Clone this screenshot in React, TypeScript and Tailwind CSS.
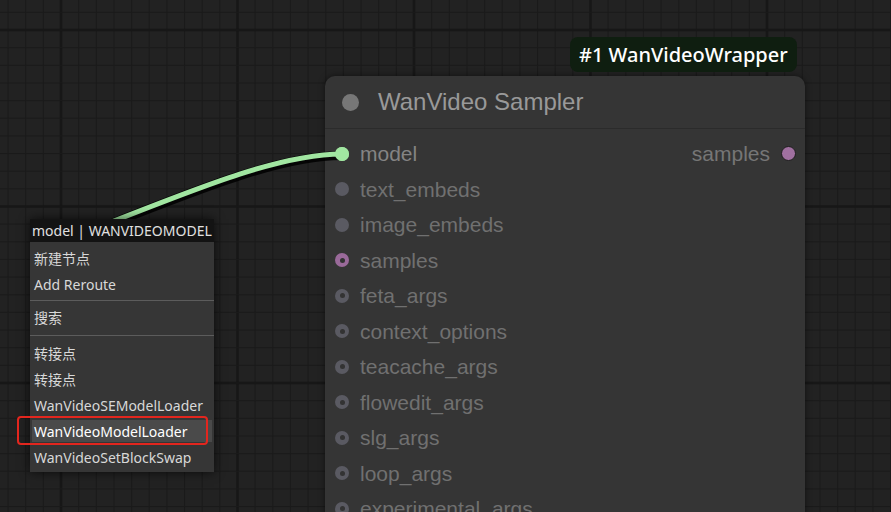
const STEP = 17.65;

const GridBackground = () => {
  const verticals = [];
  for (let i = -4; i <= 47; i++) verticals.push(i);
  const horizontals = [];
  for (let i = -2; i <= 28; i++) horizontals.push(i);
  return (
    <svg className="absolute inset-0" width="891" height="512">
      <rect width="891" height="512" fill="#222222" />
      {verticals.map((i) => (
        <line
          key={"v" + i}
          x1={61 + i * STEP}
          x2={61 + i * STEP}
          y1={0}
          y2={512}
          stroke={i % 10 === 0 ? "#171717" : "#1b1b1b"}
          strokeWidth={i % 10 === 0 ? 2.5 : 1}
        />
      ))}
      {horizontals.map((i) => (
        <line
          key={"h" + i}
          y1={30 + i * STEP}
          y2={30 + i * STEP}
          x1={0}
          x2={891}
          stroke={i % 10 === 0 ? "#171717" : "#1b1b1b"}
          strokeWidth={i % 10 === 0 ? 2.5 : 1}
        />
      ))}
    </svg>
  );
};

type Slot = { name: string; kind: "link" | "plain" | "purple" | "optional" };

const inputs: Slot[] = [
  { name: "text_embeds", kind: "plain" },
  { name: "image_embeds", kind: "plain" },
  { name: "samples", kind: "purple" },
  { name: "feta_args", kind: "optional" },
  { name: "context_options", kind: "optional" },
  { name: "teacache_args", kind: "optional" },
  { name: "flowedit_args", kind: "optional" },
  { name: "slg_args", kind: "optional" },
  { name: "loop_args", kind: "optional" },
  { name: "experimental_args", kind: "optional" },
];

const Dot = ({ kind }: { kind: Slot["kind"] }) => {
  if (kind === "link") return <span className="w-[14px] h-[14px] rounded-full bg-[#a1e6a1] shrink-0" />;
  if (kind === "plain") return <span className="w-[14px] h-[14px] rounded-full bg-[#5a5a62] shrink-0" />;
  return (
    <span
      className={
        kind === "purple"
          ? "w-[14px] h-[14px] rounded-full bg-[#9a6a9a] shrink-0 flex items-center justify-center"
          : "w-[14px] h-[14px] rounded-full bg-[#5a5a62] shrink-0 flex items-center justify-center"
      }
    >
      <span className="w-[5px] h-[5px] rounded-full bg-[#333333]" />
    </span>
  );
};

const SamplerNode = () => {
  return (
    <div className="absolute left-[325px] top-[76px] w-[480px] h-[460px] bg-[#353535] rounded-t-[10px] shadow-[0_0_6px_rgba(0,0,0,0.5)] font-['Liberation_Sans',Arial,sans-serif]">
      <div className="h-[53px] flex items-center pl-[17px] gap-[19px] border-b border-[#2b2b2b]">
        <span className="w-[17px] h-[17px] rounded-full bg-[#777777]" />
        <span className="text-[24px] text-[#999999]">WanVideo Sampler</span>
      </div>
      <div className="pt-[7px] flex flex-col">
        <div className="h-[35.5px] flex items-center justify-between pl-[10px] pr-[9px]">
          <div className="flex items-center gap-[11px]">
            <Dot kind="link" />
            <span className="text-[21px] text-[#848484]">model</span>
          </div>
          <div className="flex items-center gap-[11px]">
            <span className="text-[21px] text-[#767676]">samples</span>
            <span className="w-[15px] h-[15px] rounded-full bg-[#a070a0] border border-[#1e1e1e]" />
          </div>
        </div>
        {inputs.map((s) => (
          <div key={s.name} className="h-[35.5px] flex items-center gap-[11px] pl-[10px]">
            <Dot kind={s.kind} />
            <span className="text-[21px] text-[#707070]">{s.name}</span>
          </div>
        ))}
      </div>
    </div>
  );
};

const Link = () => (
  <svg className="absolute inset-0 pointer-events-none" width="891" height="512">
    <path d="M342 154 C 270 154, 170 200, 40 250" fill="none" stroke="#000000" strokeOpacity="0.85" strokeWidth="9" transform="translate(0 1.5)" />
    <path d="M342 154 C 270 154, 170 200, 40 250" fill="none" stroke="#a1e6a1" strokeWidth="5" />
    <circle cx="342" cy="154" r="7" fill="#a1e6a1" />
  </svg>
);

type MenuEntry = { label: string } | { sep: string };

const menuItems: MenuEntry[] = [
  { label: "新建节点" },
  { label: "Add Reroute" },
  { sep: "my-[3px]" },
  { label: "搜索" },
  { sep: "mt-[5px] mb-[4px]" },
  { label: "转接点" },
  { label: "转接点" },
  { label: "WanVideoSEModelLoader" },
  { label: "WanVideoModelLoader" },
  { label: "WanVideoSetBlockSwap" },
];

const ContextMenu = () => (
  <div className="absolute left-[30px] top-[219px] w-[184px] shadow-[0_0_10px_rgba(0,0,0,0.7)] font-['Noto_Sans','Noto_Sans_CJK_SC',sans-serif] text-[14px]">
    <div className="h-[23px] bg-[#131313] text-[#e0e0e0] flex items-center px-[2px] leading-none">
      model | WANVIDEOMODEL
    </div>
    <div className="bg-[#363636] pt-[3px] pb-[2px] px-[2px]">
      {menuItems.map((item, i) =>
        "sep" in item ? (
          <div key={i} className={item.sep + " h-px bg-[#5c5c5c] -mx-[2px]"} />
        ) : (
          <div key={i} className="h-[26px] py-[2px]">
            <div
              className={
                item.label === "WanVideoModelLoader"
                  ? "h-[22px] flex items-center px-[2px] bg-[#4a4a4a] text-white"
                  : "h-[22px] flex items-center px-[2px] text-[#d8d8d8]"
              }
            >
              {item.label}
            </div>
          </div>
        )
      )}
    </div>
  </div>
);

export default function App() {
  return (
    <div className="relative w-[891px] h-[512px] overflow-hidden bg-[#222222]">
      <GridBackground />
      <SamplerNode />
      <div className="absolute left-[570px] top-[37px] h-[35px] px-[9px] rounded-[8px] bg-[#0f1e10] flex items-center font-['Noto_Sans',sans-serif] font-medium text-[20px] text-white">
        #1 WanVideoWrapper
      </div>
      <Link />
      <ContextMenu />
      <div className="absolute left-[17px] top-[416px] w-[191px] h-[29px] border-2 border-[#e3261e] rounded-[4px]" />
    </div>
  );
}
